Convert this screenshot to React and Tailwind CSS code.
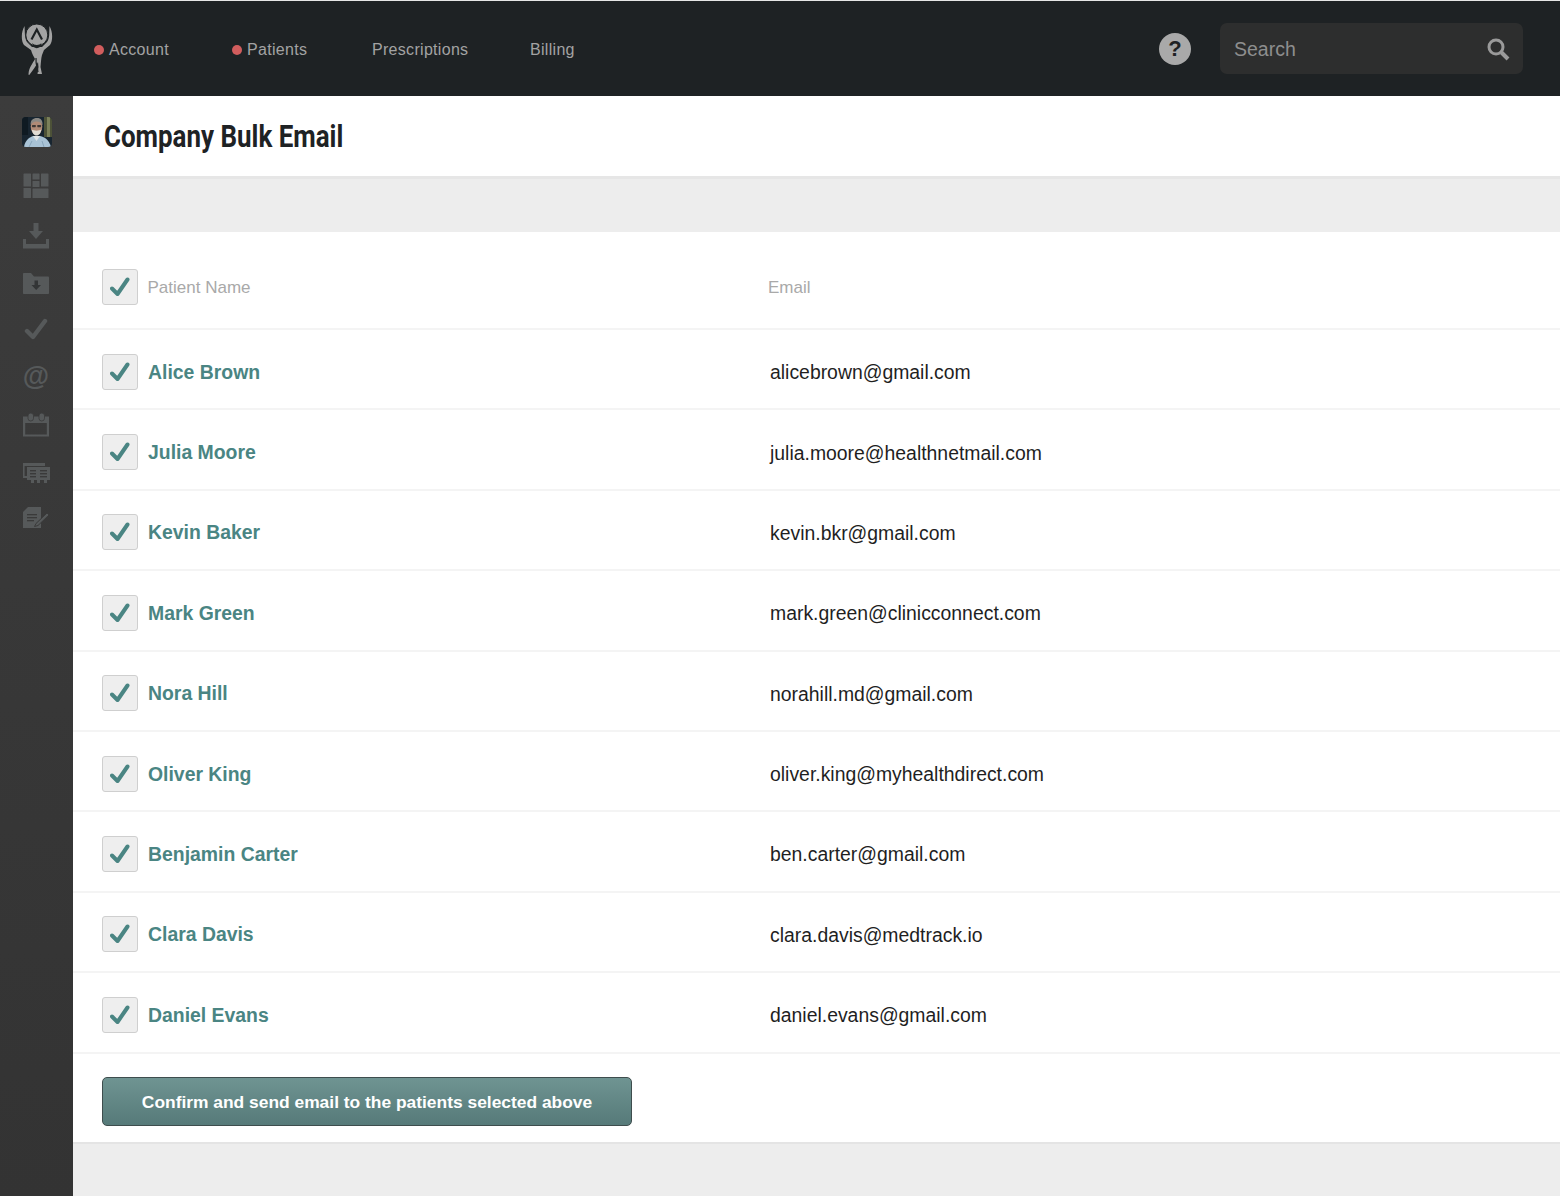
const PATIENTS = [
  ["Alice Brown", "alicebrown@gmail.com"],
  ["Julia Moore", "julia.moore@healthnetmail.com"],
  ["Kevin Baker", "kevin.bkr@gmail.com"],
  ["Mark Green", "mark.green@clinicconnect.com"],
  ["Nora Hill", "norahill.md@gmail.com"],
  ["Oliver King", "oliver.king@myhealthdirect.com"],
  ["Benjamin Carter", "ben.carter@gmail.com"],
  ["Clara Davis", "clara.davis@medtrack.io"],
  ["Daniel Evans", "daniel.evans@gmail.com"],
];

const ICON = "#56595a";

function Logo() {
  return (
    <svg width="34" height="54" viewBox="0 0 34 54" fill="#a3a3a3">
      <path d="M4.5 4 C1 10 1 19 4 23 L11 28 C12 32 14 35 15 37 C13 41 9 45 8.5 52 C8.5 53.5 9.5 53 10 52 C13 48 16 44 18 40 L18.5 45 L17.5 52 L22 52 L20.5 45 C21 40 21 37 22 33 L24 28 L30 23 C33 19 33 10 29.5 4 C29 11 30 16 27 20 L22 25 L12 25 L7 20 C4.5 16 5 11 4.5 4 Z" />
      <circle cx="16.8" cy="13" r="11" stroke="#1e2224" strokeWidth="1" />
      <path d="M11.5 17.5 L16.8 7.5 L22 17.5" fill="none" stroke="#1e2224" strokeWidth="2.2" />
      <path d="M12 21 C14 23.5 19.5 23.5 21.5 21 L20 25 C18 26.5 15.5 26.5 13.5 25 Z" fill="#1e2224" />
      <path d="M16 36 C15.5 42 17.5 46 18 50" fill="none" stroke="#1e2224" strokeWidth="1.2" />
    </svg>
  );
}

function Avatar() {
  return (
    <svg width="30" height="30" viewBox="0 0 30 30" className="rounded-[4px]">
      <rect width="30" height="30" fill="#182530" />
      <rect x="22" width="8" height="20" fill="#4d5238" />
      <rect x="25" width="3" height="20" fill="#7b8059" />
      <rect x="0" width="6" height="18" fill="#0f1a22" />
      <path d="M2 30 C3 23 8 20 11 19 L18 19 C23 20 27 23 29 30 Z" fill="#a9c3d6" />
      <path d="M11 19 L14.5 24 L18 19 Z" fill="#dfe4e6" />
      <path d="M7 30 L10 24 M22 30 L20 24" stroke="#7f9cb2" strokeWidth="0.8" />
      <ellipse cx="14.5" cy="9.5" rx="5.8" ry="8" fill="#b08a76" />
      <path d="M8.6 8 C8.4 3 11 1 15 1 C19 1 21 3.5 20.5 8.5 C19.5 5.5 17.5 4.5 14.5 4.5 C11.5 4.5 10 6 8.6 8Z" fill="#8a8884" />
      <path d="M9.8 12.5 C10.5 17 12.5 18.5 14.5 18.5 C16.5 18.5 18.7 17 19.3 12.5 C17 14 12 14 9.8 12.5Z" fill="#e0dcd4" />
      <rect x="10" y="8" width="3.8" height="2.2" rx="0.6" fill="#3e3835" />
      <rect x="15.3" y="8" width="3.8" height="2.2" rx="0.6" fill="#3e3835" />
    </svg>
  );
}

function GridIcon() {
  return (
    <svg width="26" height="26" viewBox="0 0 26 26" fill={ICON}>
      <rect x="0.5" y="0.5" width="7.5" height="13" rx="0.5" />
      <rect x="0.5" y="15" width="7.5" height="10" rx="0.5" />
      <rect x="9.5" y="0.5" width="7" height="6" rx="0.5" />
      <rect x="9.5" y="8" width="7" height="6" rx="0.5" />
      <rect x="18" y="0.5" width="7.5" height="13" rx="0.5" />
      <rect x="9.5" y="15.5" width="16" height="9.5" rx="0.5" />
    </svg>
  );
}

function DownloadIcon() {
  return (
    <svg width="26" height="26" viewBox="0 0 26 26" fill={ICON}>
      <path d="M10.5 0 H15.5 V8 H20 L13 16 L6 8 H10.5 Z" />
      <path d="M0 16 H3 V21 H23 V16 H26 V25.5 H0 Z" />
    </svg>
  );
}

function FolderIcon() {
  return (
    <svg width="26" height="22" viewBox="0 0 26 22">
      <path d="M0 1 C0 .4 .4 0 1 0 H8 L11 3.5 H25 C25.6 3.5 26 4 26 4.5 V20 C26 20.6 25.6 21 25 21 H1 C.4 21 0 20.6 0 20 Z" fill={ICON} />
      <path d="M11.5 7.5 H15 V12 H18 L13.2 17 L8.5 12 H11.5 Z" fill="#333536" />
    </svg>
  );
}

function CheckIcon() {
  return (
    <svg width="24" height="22" viewBox="0 0 24 22" fill="none" stroke={ICON} strokeWidth="4.4" strokeLinecap="round" strokeLinejoin="round">
      <path d="M3 13 L9 19 L21 3" />
    </svg>
  );
}

function CalendarIcon() {
  return (
    <svg width="26" height="24" viewBox="0 0 26 24">
      <path fillRule="evenodd" d="M0 3.5 H26 V23.5 H0 Z M2.2 10 V21.5 H23.8 V10 Z" fill={ICON} />
      <rect x="5" y="0" width="5.5" height="8" rx="2.7" fill={ICON} stroke="#3a3a3a" strokeWidth="0.8" />
      <rect x="16" y="0" width="5.5" height="8" rx="2.7" fill={ICON} stroke="#3a3a3a" strokeWidth="0.8" />
    </svg>
  );
}

function TableIcon() {
  return (
    <svg width="27" height="21" viewBox="0 0 27 21" fill={ICON}>
      <path fillRule="evenodd" d="M0 0 H22 V3 H1.6 V13 H4 V15 H0 Z" />
      <path fillRule="evenodd" d="M4 4 H27 V17 H24 V20 H21 V17 H17 V20 H14 V17 H11 V20 H8 V17 H4 Z" />
      <g fill="#3a3a3a">
        <rect x="7" y="7" width="6" height="1.4" />
        <rect x="7" y="10" width="6" height="1.4" />
        <rect x="7" y="13" width="6" height="1.4" />
        <rect x="17" y="7" width="7" height="1.4" />
        <rect x="17" y="10" width="7" height="1.4" />
        <rect x="17" y="13" width="7" height="1.4" />
      </g>
    </svg>
  );
}

function NoteIcon() {
  return (
    <svg width="26" height="22" viewBox="0 0 26 22">
      <path d="M5 0 H18 V21 H0 V5 Z" fill={ICON} />
      <g fill="#3a3a3a">
        <rect x="4" y="7" width="10" height="1.3" />
        <rect x="4" y="10" width="10" height="1.3" />
        <rect x="4" y="13" width="7" height="1.3" />
      </g>
      <path d="M24 6 L13 16.5 L11.5 19.5 L15 18.5 L26 8 Z" fill={ICON} stroke="#3a3a3a" strokeWidth="1" />
    </svg>
  );
}

function Checkbox() {
  return (
    <div className="flex h-9 w-9 shrink-0 items-center justify-center rounded-[3px] border-[1.5px] border-[#cfcfcf] bg-[#eeeeee]">
      <svg width="20" height="20" viewBox="0 0 20 20" fill="none" stroke="#4a8583" strokeWidth="4" strokeLinecap="round" strokeLinejoin="round">
        <path d="M2 11.5 L7.5 17 L17.5 2.5" />
      </svg>
    </div>
  );
}

function NavItem({ label, dot, className }) {
  return (
    <div className={`flex items-center pt-[2px] text-[16px] tracking-[0.3px] text-[#a3a3a3] ${className}`}>
      {dot && <span className="mr-[5px] h-[10px] w-[10px] rounded-full bg-[#d15d5d]" />}
      {label}
    </div>
  );
}

function Row({ name, email }) {
  return (
    <div className="grid h-[80.4px] grid-cols-[668px_1fr] items-center border-b-2 border-[#f4f4f4] pl-[29px] pt-[5px]">
      <div className="flex items-center gap-[10px]">
        <Checkbox />
        <span className="pt-[1px] text-[19.4px] font-bold text-[#4a8583]">{name}</span>
      </div>
      <span className="pt-[2px] text-[19.4px] text-[#1f1f1f]">{email}</span>
    </div>
  );
}

export default function App() {
  return (
    <div className="flex min-h-[1196px] flex-col bg-[#ededed] font-['Liberation_Sans',Arial,sans-serif]">
      <header className="flex h-24 items-center border-t border-[#e6e6e6] bg-[#1e2224]">
        <div className="flex w-[94px] justify-start pl-[20px] pt-[1px]">
          <Logo />
        </div>
        <NavItem label="Account" dot className="w-[138px]" />
        <NavItem label="Patients" dot className="w-[140px]" />
        <NavItem label="Prescriptions" className="w-[158px]" />
        <NavItem label="Billing" />
        <div className="ml-auto flex items-center gap-[29px] pr-[37px]">
          <div className="flex h-8 w-8 items-center justify-center rounded-full bg-[#a9a9a9] text-[22px] font-bold text-[#1e2224]">?</div>
          <div className="flex h-[51px] w-[303px] items-center justify-between rounded-[7px] bg-[#2d2e2e] pl-[14px] pr-[13px] pt-[1px]">
            <span className="pt-[2px] text-[19.5px] text-[#8e8e8e]">Search</span>
            <svg width="24" height="24" viewBox="0 0 24 24" fill="none" stroke="#9a9a9a">
              <circle cx="10" cy="10" r="7" strokeWidth="3" />
              <path d="M15.5 15.5 L22 22" strokeWidth="4" />
            </svg>
          </div>
        </div>
      </header>

      <div className="flex flex-1">
        <aside className="flex w-[73px] shrink-0 flex-col items-center bg-gradient-to-b from-[#3c3c3c] to-[#333333] pr-[1px] pt-[21px]">
          <div className="ml-[2px] flex h-[30px] items-center justify-center"><Avatar /></div>
          <div className="mt-[26px]"><GridIcon /></div>
          <div className="mt-6"><DownloadIcon /></div>
          <div className="mt-[24px]"><FolderIcon /></div>
          <div className="mt-[23px]"><CheckIcon /></div>
          <div className="mt-[20px] flex h-[32px] items-center text-[27px] leading-none font-bold text-[#56595a]">@</div>
          <div className="mt-[21px]"><CalendarIcon /></div>
          <div className="mt-[26px]"><TableIcon /></div>
          <div className="mt-[23px]"><NoteIcon /></div>
        </aside>

        <main className="flex min-w-0 flex-1 flex-col">
          <div className="flex h-[83px] items-center border-b-[3px] border-[#e6e6e6] bg-white pl-[31px]">
            <h1 className="origin-left scale-x-[0.81] font-['Roboto',sans-serif] text-[32px] font-bold whitespace-nowrap text-[#1e2224]">Company Bulk Email</h1>
          </div>
          <div className="h-[53px]" />
          <section className="h-[912px] border-b-[2px] border-[#e4e4e4] bg-white">
            <div className="grid h-[98px] grid-cols-[666px_1fr] items-center border-b-2 border-[#f4f4f4] pl-[29px] pt-[13px] text-[17px] text-[#a9a9a9]">
              <div className="flex items-center gap-[9.5px]">
                <Checkbox />
                <span className="pt-[2px]">Patient Name</span>
              </div>
              <span className="pt-[2px]">Email</span>
            </div>
            {PATIENTS.map(([name, email]) => (
              <Row key={name} name={name} email={email} />
            ))}
            <div className="pl-[29px] pt-[23px]">
              <button className="h-[49px] w-[530px] rounded-[5px] border border-[#3e4d4d] bg-gradient-to-b from-[#6f9492] to-[#567a79] pt-[2px] text-[17.4px] font-bold text-white">
                Confirm and send email to the patients selected above
              </button>
            </div>
          </section>
        </main>
      </div>
    </div>
  );
}
